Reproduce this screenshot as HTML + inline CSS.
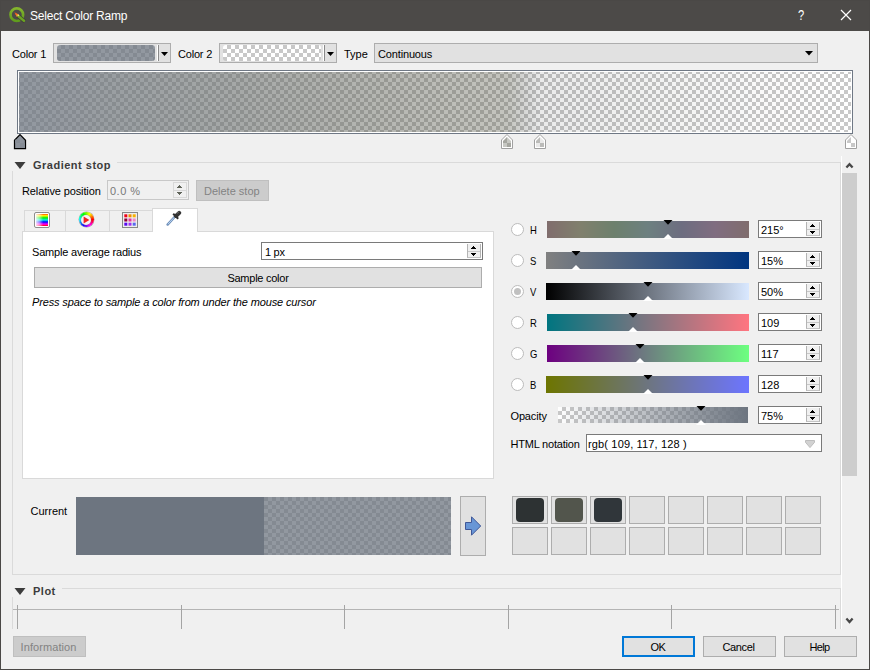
<!DOCTYPE html>
<html><head><meta charset="utf-8">
<style>
*{box-sizing:border-box;margin:0;padding:0}
html,body{width:870px;height:670px;overflow:hidden;background:#f0f0f0}
body{position:relative;font-family:"Liberation Sans",sans-serif;font-size:11px;color:#000;line-height:13px}
.a{position:absolute}
.t{position:absolute;white-space:nowrap;line-height:13px;font-size:11px}
.b{font-weight:bold;color:#3c3c3c}
.btn{position:absolute;background:#e1e1e1;border:1px solid #adadad}
.dis{position:absolute;background:#cccccc;border:1px solid #bfbfbf}
.spin{position:absolute;background:#fff;border:1px solid #7a7a7a}
.sb{position:absolute;background:#e1e1e1;border:1px solid #c6c6c6}
.chk{background:repeating-conic-gradient(#c8c8c8 0% 25%,#fff 0% 50%) 0 0/8px 8px}
.ln{position:absolute;background:#dadada}
.radio{position:absolute;width:13px;height:13px;border-radius:50%;background:#fff;border:1px solid #bcbcbc}
.bar{position:absolute;height:17px}
.cell{position:absolute;width:36px;height:28px;background:#e1e1e1;border:1px solid #adadad}
.sw{position:absolute;left:3px;top:1px;width:28px;height:24px;border-radius:4px}
</style></head><body>
<div class="a" style="left:0;top:0;width:870px;height:31px;background:#4c4a48"></div>
<svg class="a" style="left:8px;top:6px" width="18" height="18" viewBox="0 0 18 18">
 <defs><linearGradient id="qg" x1="0" y1="0" x2="0" y2="1"><stop offset="0" stop-color="#84b52c"/><stop offset="1" stop-color="#5f9c1d"/></linearGradient></defs>
 <circle cx="8.8" cy="8.7" r="6.3" fill="none" stroke="url(#qg)" stroke-width="2.7"/>
 <path d="M9.6 9.6 L16.6 15.4" stroke="#3f3d3b" stroke-width="4" stroke-linecap="butt"/>
 <path d="M10.2 10 L16 14.8" stroke="#6ba421" stroke-width="2.5" stroke-linecap="round"/>
 <path d="M6.6 6.4 L11 8.4 L8.8 11 Z" fill="#f08a1c"/>
 <path d="M6.6 6.4 L9 7.5 L7.8 8.9 Z" fill="#e8502a"/>
 <circle cx="10.4" cy="9.3" r="0.9" fill="#d8dc90"/>
</svg>
<div class="t" style="left:30px;top:8.5px;font-size:12px;letter-spacing:-0.2px;line-height:15px;color:#fff">Select Color Ramp</div>
<div class="t" style="left:798px;top:6.5px;font-size:14px;line-height:16px;color:#fff;transform:scaleX(.8);transform-origin:0 0">?</div>
<svg class="a" style="left:840px;top:9px" width="12" height="12" viewBox="0 0 12 12"><path d="M1 1 L11 11 M11 1 L1 11" stroke="#fff" stroke-width="1.2" fill="none"/></svg>
<div class="t " style="left:12px;top:48px;letter-spacing:-0.2px;">Color 1</div>
<div class="btn" style="left:53px;top:43px;width:118px;height:20px"></div>
<div class="a chk" style="left:57px;top:45px;width:98px;height:16px;border-radius:3px;overflow:hidden"><div style="width:100%;height:100%;background:rgba(109,117,128,.75)"></div></div>
<div class="a" style="left:157px;top:45px;width:1px;height:16px;background:#fff"></div><div class="a" style="left:158px;top:45px;width:1px;height:16px;background:#8a8a8a"></div>
<svg class="a" style="left:161px;top:52px" width="7" height="4"><path d="M0 0H7L3.5 4Z" fill="#000"/></svg>
<div class="t " style="left:178px;top:48px;letter-spacing:-0.2px;">Color 2</div>
<div class="btn" style="left:219px;top:43px;width:118px;height:20px"></div>
<div class="a chk" style="left:223px;top:45px;width:98px;height:16px;border-radius:3px"></div>
<div class="a" style="left:323px;top:45px;width:1px;height:16px;background:#fff"></div><div class="a" style="left:324px;top:45px;width:1px;height:16px;background:#8a8a8a"></div>
<svg class="a" style="left:327px;top:52px" width="7" height="4"><path d="M0 0H7L3.5 4Z" fill="#000"/></svg>
<div class="t " style="left:344px;top:48px;">Type</div>
<div class="btn" style="left:374px;top:43px;width:444px;height:20px"></div>
<div class="t " style="left:378px;top:48px;letter-spacing:-0.15px;">Continuous</div>
<svg class="a" style="left:805px;top:51px" width="8" height="5"><path d="M0 0H8L4 4.5Z" fill="#000"/></svg>
<div class="a" style="left:17px;top:70px;width:836px;height:64px;border:1px solid #6f7885;background:#fff"></div>
<div class="a chk" style="left:19px;top:72px;width:832px;height:60px;background-position:5px 2px">
 <div style="width:100%;height:100%;background:linear-gradient(to right,rgba(109,117,128,0.750) 0.00%,rgba(108,116,126,0.733) 2.44%,rgba(107,114,123,0.717) 4.89%,rgba(106,113,121,0.700) 7.33%,rgba(105,112,118,0.683) 9.77%,rgba(104,111,116,0.667) 12.22%,rgba(103,110,114,0.650) 14.66%,rgba(102,108,111,0.633) 17.11%,rgba(101,107,109,0.617) 19.55%,rgba(100,106,106,0.600) 21.99%,rgba(99,104,104,0.583) 24.44%,rgba(98,103,101,0.567) 26.88%,rgba(98,102,99,0.550) 29.32%,rgba(97,101,97,0.533) 31.77%,rgba(96,100,94,0.517) 34.21%,rgba(95,98,92,0.500) 36.66%,rgba(94,97,89,0.483) 39.10%,rgba(93,96,87,0.467) 41.54%,rgba(92,94,84,0.450) 43.99%,rgba(91,93,82,0.433) 46.43%,rgba(90,92,80,0.417) 48.88%,rgba(89,91,77,0.400) 51.32%,rgba(88,90,75,0.383) 53.76%,rgba(87,88,72,0.367) 56.21%,rgba(86,87,70,0.350) 58.65%,rgba(84,85,69,0.340) 58.81%,rgba(83,84,68,0.329) 58.98%,rgba(81,82,68,0.319) 59.14%,rgba(79,81,67,0.308) 59.31%,rgba(77,79,66,0.298) 59.47%,rgba(76,78,65,0.287) 59.64%,rgba(74,76,64,0.277) 59.80%,rgba(72,75,64,0.267) 59.97%,rgba(71,73,63,0.256) 60.13%,rgba(69,72,62,0.246) 60.30%,rgba(67,70,61,0.235) 60.46%,rgba(66,68,60,0.225) 60.62%,rgba(64,67,60,0.215) 60.79%,rgba(62,65,59,0.204) 60.95%,rgba(60,64,58,0.194) 61.12%,rgba(59,62,57,0.183) 61.28%,rgba(57,61,57,0.173) 61.45%,rgba(55,59,56,0.163) 61.61%,rgba(54,58,55,0.152) 61.78%,rgba(52,56,54,0.142) 61.94%,rgba(50,55,53,0.131) 62.11%,rgba(48,53,53,0.121) 62.27%,rgba(47,52,52,0.110) 62.44%,rgba(45,50,51,0.100) 62.60%,rgba(45,50,51,0.096) 64.16%,rgba(45,50,51,0.092) 65.72%,rgba(45,50,51,0.088) 67.28%,rgba(45,50,51,0.083) 68.83%,rgba(45,50,51,0.079) 70.39%,rgba(45,50,51,0.075) 71.95%,rgba(45,50,51,0.071) 73.51%,rgba(45,50,51,0.067) 75.07%,rgba(45,50,51,0.062) 76.62%,rgba(45,50,51,0.058) 78.18%,rgba(45,50,51,0.054) 79.74%,rgba(45,50,51,0.050) 81.30%,rgba(45,50,51,0.046) 82.86%,rgba(45,50,51,0.042) 84.42%,rgba(45,50,51,0.038) 85.97%,rgba(45,50,51,0.033) 87.53%,rgba(45,50,51,0.029) 89.09%,rgba(45,50,51,0.025) 90.65%,rgba(45,50,51,0.021) 92.21%,rgba(45,50,51,0.017) 93.77%,rgba(45,50,51,0.012) 95.33%,rgba(45,50,51,0.008) 96.88%,rgba(45,50,51,0.004) 98.44%,rgba(45,50,51,0.000) 100.00%)"></div>
</div>
<svg class="a" style="left:13px;top:133px" width="15" height="17" viewBox="0 0 15 17"><path d="M7 1.6 L12.5 7.3 V15.5 H1.5 V7.3 Z" fill="#8d939c" stroke="#000" stroke-width="1.25" stroke-linejoin="miter"/><rect x="7" y="10" width="4.9" height="4.9" fill="#868c95"/><rect x="2.1" y="6.6" width="4.9" height="3.4" fill="#868c95"/></svg>
<svg class="a" style="left:500px;top:133px" width="15" height="17" viewBox="0 0 15 17"><defs><clipPath id="c507"><path d="M7 4 L11 8 V14 H3 V8 Z"/></clipPath></defs><path d="M7 1.5 L12.5 7 V15.5 H1.5 V7 Z" fill="#fff" stroke="#a0a0a0" stroke-width="1"/><g clip-path="url(#c507)"><rect x="3" y="4" width="4" height="6" fill="#a5a6a0"/><rect x="7" y="4" width="4" height="6" fill="#c7c8c3"/><rect x="3" y="10" width="4" height="4" fill="#c7c8c3"/><rect x="7" y="10" width="4" height="4" fill="#a5a6a0"/></g></svg>
<svg class="a" style="left:533px;top:133px" width="15" height="17" viewBox="0 0 15 17"><defs><clipPath id="c540"><path d="M7 4 L11 8 V14 H3 V8 Z"/></clipPath></defs><path d="M7 1.5 L12.5 7 V15.5 H1.5 V7 Z" fill="#fff" stroke="#a0a0a0" stroke-width="1"/><g clip-path="url(#c540)"><rect x="3" y="4" width="4" height="6" fill="#bbbbb9"/><rect x="7" y="4" width="4" height="6" fill="#e9e9e9"/><rect x="3" y="10" width="4" height="4" fill="#e9e9e9"/><rect x="7" y="10" width="4" height="4" fill="#bbbbb9"/></g></svg>
<svg class="a" style="left:844px;top:133px" width="15" height="17" viewBox="0 0 15 17"><defs><clipPath id="c851"><path d="M7 4 L11 8 V14 H3 V8 Z"/></clipPath></defs><path d="M7 1.5 L12.5 7 V15.5 H1.5 V7 Z" fill="#fff" stroke="#a0a0a0" stroke-width="1"/><g clip-path="url(#c851)"><rect x="3" y="4" width="4" height="6" fill="#c8c8c8"/><rect x="7" y="4" width="4" height="6" fill="#ffffff"/><rect x="3" y="10" width="4" height="4" fill="#ffffff"/><rect x="7" y="10" width="4" height="4" fill="#c8c8c8"/></g></svg>
<svg class="a" style="left:14px;top:162px" width="12" height="8"><path d="M0.5 0H11.5L6 7Z" fill="#3c3c3c"/></svg>
<div class="t b" style="left:33px;top:159px;letter-spacing:0.5px;">Gradient stop</div>
<div class="ln" style="left:117px;top:162px;width:724px;height:1px"></div>
<div class="ln" style="left:12px;top:171px;width:1px;height:404px"></div>
<div class="ln" style="left:840px;top:162px;width:1px;height:413px"></div>
<div class="ln" style="left:12px;top:574px;width:829px;height:1px"></div>
<div class="t " style="left:22px;top:185px;letter-spacing:-0.12px;">Relative position</div>
<div class="a" style="left:107px;top:180px;width:82px;height:20px;border:1px solid #c8c8c8;background:#f0f0f0"></div>
<div class="t " style="left:110px;top:185px;letter-spacing:0.5px;color:#787878;">0.0 %</div>
<div class="a" style="left:173px;top:182px;width:14px;height:16px;border:1px solid #d8d8d8;background:#f0f0f0"></div>
<div class="a" style="left:174px;top:190px;width:12px;height:1px;background:#d8d8d8"></div>
<svg class="a" style="left:177px;top:185px" width="5" height="10" shape-rendering="crispEdges" fill="#60645a"><rect x="2" y="0" width="1" height="1"/><rect x="1" y="1" width="3" height="1"/><rect x="0" y="2" width="5" height="1"/><rect x="0" y="7" width="5" height="1"/><rect x="1" y="8" width="3" height="1"/><rect x="2" y="9" width="1" height="1"/></svg>
<div class="dis" style="left:196px;top:180px;width:73px;height:21px"></div>
<div class="t " style="left:204px;top:185px;color:#838383;">Delete stop</div>
<div class="a" style="left:24px;top:210px;width:129px;height:22px;border:1px solid #d9d9d9;border-bottom:none"></div>
<div class="ln" style="left:65px;top:211px;width:1px;height:21px;background:#d9d9d9"></div>
<div class="ln" style="left:109px;top:211px;width:1px;height:21px;background:#d9d9d9"></div>
<div class="a" style="left:22px;top:231px;width:472px;height:248px;border:1px solid #d9d9d9;background:#fff"></div>
<div class="a" style="left:152px;top:208px;width:46px;height:24px;border:1px solid #d9d9d9;border-bottom:none;background:#fff"></div>
<div class="a" style="left:34px;top:212px;width:16px;height:16px;border:1px solid #8c8c8c;border-radius:2px;background:#fff;padding:1px"><div style="width:12px;height:12px;background:linear-gradient(to right,rgba(255,255,255,.85),rgba(255,255,255,.5) 30%,rgba(255,255,255,0) 60%),linear-gradient(to bottom,#f40,#ff0 14%,#0e0 32%,#0ee 50%,#00f 66%,#f0f 84%,#f00)"></div></div>
<div class="a" style="left:78.5px;top:212.3px;width:15px;height:15px;border-radius:50%;background:conic-gradient(from 90deg,#f00,#f0f,#00f,#0ff,#0f0,#ff0,#f00);box-shadow:0 0 0 .5px rgba(120,120,120,.6)"></div>
<div class="a" style="left:81px;top:214.8px;width:10px;height:10px;border-radius:50%;background:#f6f0f0;box-shadow:0 0 0 .5px rgba(120,120,120,.5)"></div>
<svg class="a" style="left:83px;top:216px" width="7" height="8"><path d="M0.6 0.5L6.4 4L0.6 7.5Z" fill="#f42020"/></svg>
<div class="a" style="left:122px;top:212px;width:16px;height:16px;border:1px solid #888;background:#eee"></div>
<svg class="a" style="left:124px;top:214px" width="12" height="12">
<rect x="0.3" y="0.3" width="3" height="3" fill="#f00018"/><rect x="4.5" y="0.3" width="3" height="3" fill="#f09000"/><rect x="8.7" y="0.3" width="3" height="3" fill="#f8b000"/>
<rect x="0.3" y="4.5" width="3" height="3" fill="#900038"/><rect x="4.5" y="4.5" width="3" height="3" fill="#e830a0"/><rect x="8.7" y="4.5" width="3" height="3" fill="#f088c8"/>
<rect x="0.3" y="8.7" width="3" height="3" fill="#5808f0"/><rect x="4.5" y="8.7" width="3" height="3" fill="#a030f0"/><rect x="8.7" y="8.7" width="3" height="3" fill="#5868f0"/>
</svg>
<svg class="a" style="left:166px;top:210px" width="16" height="16" viewBox="0 0 16 16"><path d="M1.6 14.6 L9 6.5" stroke="#6f8fb8" stroke-width="2.4" stroke-linecap="round"/><path d="M2 14.2 L9 6.5" stroke="#b8d4f4" stroke-width="1"/><path d="M7.2 3.8 L12.2 8.8" stroke="#2a2a2a" stroke-width="2"/><path d="M10 6 L13.2 2.8" stroke="#333" stroke-width="4" stroke-linecap="round"/><path d="M11.2 3.4 L12.6 2" stroke="#777" stroke-width="1" stroke-linecap="round"/></svg>
<div class="t " style="left:32px;top:246px;letter-spacing:-0.18px;">Sample average radius</div>
<div class="spin" style="left:261px;top:242px;width:222px;height:18px"></div>
<div class="t " style="left:265px;top:246px;letter-spacing:-0.3px;">1 px</div>
<div class="a" style="left:467px;top:244px;width:14px;height:14px;background:#f0f0f0;border-left:1px solid #b4b4b4;border-right:1px solid #b4b4b4;border-bottom:1px solid #c4c4c4"></div>
<div class="a" style="left:468px;top:251px;width:12px;height:1px;background:#c8c8c8"></div>
<svg class="a" style="left:471px;top:246px" width="5" height="10" shape-rendering="crispEdges" fill="#000"><rect x="2" y="0" width="1" height="1"/><rect x="1" y="1" width="3" height="1"/><rect x="0" y="2" width="5" height="1"/><rect x="0" y="7" width="5" height="1"/><rect x="1" y="8" width="3" height="1"/><rect x="2" y="9" width="1" height="1"/></svg>
<div class="btn" style="left:34px;top:267px;width:448px;height:21px"></div>
<div class="t" style="left:34px;top:272px;width:448px;text-align:center;letter-spacing:-0.25px;">Sample color</div>
<div class="t " style="left:32px;top:296px;letter-spacing:-0.14px;font-style:italic;">Press space to sample a color from under the mouse cursor</div>
<div class="radio" style="left:511px;top:223px"></div>
<div class="t " style="left:529.7px;top:224px;transform:scaleX(.86);transform-origin:0 0;">H</div>
<div class="bar" style="left:547px;top:221px;width:202px;background:linear-gradient(to right,#806d6d 0%,#80806d 16.67%,#6d806d 33.33%,#6d8080 50%,#6d6d80 66.67%,#806d80 83.33%,#806d6d 100%)"></div>
<svg class="a" style="left:663px;top:220px" width="10" height="19"><path d="M0.5 0H9.5L5 4.7Z" fill="#000"/><path d="M0 19H10L5 14Z" fill="#fff"/></svg>
<div class="spin" style="left:758px;top:220px;width:64px;height:18px"></div>
<div class="t " style="left:761px;top:224px;">215°</div>
<div class="a" style="left:806px;top:222px;width:14px;height:14px;background:#f0f0f0;border-left:1px solid #b4b4b4;border-right:1px solid #b4b4b4;border-bottom:1px solid #c4c4c4"></div>
<div class="a" style="left:807px;top:229px;width:12px;height:1px;background:#c8c8c8"></div>
<svg class="a" style="left:810px;top:224px" width="5" height="10" shape-rendering="crispEdges" fill="#000"><rect x="2" y="0" width="1" height="1"/><rect x="1" y="1" width="3" height="1"/><rect x="0" y="2" width="5" height="1"/><rect x="0" y="7" width="5" height="1"/><rect x="1" y="8" width="3" height="1"/><rect x="2" y="9" width="1" height="1"/></svg>
<div class="radio" style="left:511px;top:254px"></div>
<div class="t " style="left:529.7px;top:255px;transform:scaleX(.86);transform-origin:0 0;">S</div>
<div class="bar" style="left:546px;top:252px;width:203px;background:linear-gradient(to right,#808080,#003580)"></div>
<svg class="a" style="left:571px;top:251px" width="10" height="19"><path d="M0.5 0H9.5L5 4.7Z" fill="#000"/><path d="M0 19H10L5 14Z" fill="#fff"/></svg>
<div class="spin" style="left:758px;top:251px;width:64px;height:18px"></div>
<div class="t " style="left:761px;top:255px;">15%</div>
<div class="a" style="left:806px;top:253px;width:14px;height:14px;background:#f0f0f0;border-left:1px solid #b4b4b4;border-right:1px solid #b4b4b4;border-bottom:1px solid #c4c4c4"></div>
<div class="a" style="left:807px;top:260px;width:12px;height:1px;background:#c8c8c8"></div>
<svg class="a" style="left:810px;top:255px" width="5" height="10" shape-rendering="crispEdges" fill="#000"><rect x="2" y="0" width="1" height="1"/><rect x="1" y="1" width="3" height="1"/><rect x="0" y="2" width="5" height="1"/><rect x="0" y="7" width="5" height="1"/><rect x="1" y="8" width="3" height="1"/><rect x="2" y="9" width="1" height="1"/></svg>
<div class="radio" style="left:511px;top:285px;border-color:#bcbcbc"></div><div class="a" style="left:514px;top:288px;width:7px;height:7px;border-radius:50%;background:#c0c0c0"></div>
<div class="t " style="left:529.7px;top:286px;transform:scaleX(.86);transform-origin:0 0;">V</div>
<div class="bar" style="left:546px;top:283px;width:203px;background:linear-gradient(to right,#000,#d9e8ff)"></div>
<svg class="a" style="left:643px;top:282px" width="10" height="19"><path d="M0.5 0H9.5L5 4.7Z" fill="#000"/><path d="M0 19H10L5 14Z" fill="#fff"/></svg>
<div class="spin" style="left:758px;top:282px;width:64px;height:18px"></div>
<div class="t " style="left:761px;top:286px;">50%</div>
<div class="a" style="left:806px;top:284px;width:14px;height:14px;background:#f0f0f0;border-left:1px solid #b4b4b4;border-right:1px solid #b4b4b4;border-bottom:1px solid #c4c4c4"></div>
<div class="a" style="left:807px;top:291px;width:12px;height:1px;background:#c8c8c8"></div>
<svg class="a" style="left:810px;top:286px" width="5" height="10" shape-rendering="crispEdges" fill="#000"><rect x="2" y="0" width="1" height="1"/><rect x="1" y="1" width="3" height="1"/><rect x="0" y="2" width="5" height="1"/><rect x="0" y="7" width="5" height="1"/><rect x="1" y="8" width="3" height="1"/><rect x="2" y="9" width="1" height="1"/></svg>
<div class="radio" style="left:511px;top:316px"></div>
<div class="t " style="left:529.7px;top:317px;transform:scaleX(.86);transform-origin:0 0;">R</div>
<div class="bar" style="left:547px;top:314px;width:202px;background:linear-gradient(to right,#007580,#ff7580)"></div>
<svg class="a" style="left:628px;top:313px" width="10" height="19"><path d="M0.5 0H9.5L5 4.7Z" fill="#000"/><path d="M0 19H10L5 14Z" fill="#fff"/></svg>
<div class="spin" style="left:758px;top:313px;width:64px;height:18px"></div>
<div class="t " style="left:761px;top:317px;">109</div>
<div class="a" style="left:806px;top:315px;width:14px;height:14px;background:#f0f0f0;border-left:1px solid #b4b4b4;border-right:1px solid #b4b4b4;border-bottom:1px solid #c4c4c4"></div>
<div class="a" style="left:807px;top:322px;width:12px;height:1px;background:#c8c8c8"></div>
<svg class="a" style="left:810px;top:317px" width="5" height="10" shape-rendering="crispEdges" fill="#000"><rect x="2" y="0" width="1" height="1"/><rect x="1" y="1" width="3" height="1"/><rect x="0" y="2" width="5" height="1"/><rect x="0" y="7" width="5" height="1"/><rect x="1" y="8" width="3" height="1"/><rect x="2" y="9" width="1" height="1"/></svg>
<div class="radio" style="left:511px;top:347px"></div>
<div class="t " style="left:529.7px;top:348px;transform:scaleX(.86);transform-origin:0 0;">G</div>
<div class="bar" style="left:547px;top:345px;width:202px;background:linear-gradient(to right,#6d0080,#6dff80)"></div>
<svg class="a" style="left:635px;top:344px" width="10" height="19"><path d="M0.5 0H9.5L5 4.7Z" fill="#000"/><path d="M0 19H10L5 14Z" fill="#fff"/></svg>
<div class="spin" style="left:758px;top:344px;width:64px;height:18px"></div>
<div class="t " style="left:761px;top:348px;">117</div>
<div class="a" style="left:806px;top:346px;width:14px;height:14px;background:#f0f0f0;border-left:1px solid #b4b4b4;border-right:1px solid #b4b4b4;border-bottom:1px solid #c4c4c4"></div>
<div class="a" style="left:807px;top:353px;width:12px;height:1px;background:#c8c8c8"></div>
<svg class="a" style="left:810px;top:348px" width="5" height="10" shape-rendering="crispEdges" fill="#000"><rect x="2" y="0" width="1" height="1"/><rect x="1" y="1" width="3" height="1"/><rect x="0" y="2" width="5" height="1"/><rect x="0" y="7" width="5" height="1"/><rect x="1" y="8" width="3" height="1"/><rect x="2" y="9" width="1" height="1"/></svg>
<div class="radio" style="left:511px;top:378px"></div>
<div class="t " style="left:529.7px;top:379px;transform:scaleX(.86);transform-origin:0 0;">B</div>
<div class="bar" style="left:546px;top:376px;width:203px;background:linear-gradient(to right,#6d7500,#6d75ff)"></div>
<svg class="a" style="left:643px;top:375px" width="10" height="19"><path d="M0.5 0H9.5L5 4.7Z" fill="#000"/><path d="M0 19H10L5 14Z" fill="#fff"/></svg>
<div class="spin" style="left:758px;top:375px;width:64px;height:18px"></div>
<div class="t " style="left:761px;top:379px;">128</div>
<div class="a" style="left:806px;top:377px;width:14px;height:14px;background:#f0f0f0;border-left:1px solid #b4b4b4;border-right:1px solid #b4b4b4;border-bottom:1px solid #c4c4c4"></div>
<div class="a" style="left:807px;top:384px;width:12px;height:1px;background:#c8c8c8"></div>
<svg class="a" style="left:810px;top:379px" width="5" height="10" shape-rendering="crispEdges" fill="#000"><rect x="2" y="0" width="1" height="1"/><rect x="1" y="1" width="3" height="1"/><rect x="0" y="2" width="5" height="1"/><rect x="0" y="7" width="5" height="1"/><rect x="1" y="8" width="3" height="1"/><rect x="2" y="9" width="1" height="1"/></svg>
<div class="t " style="left:510.5px;top:410px;letter-spacing:-0.15px;">Opacity</div>
<div class="bar chk" style="left:558px;top:407px;width:190px;height:16px"><div style="width:100%;height:100%;background:linear-gradient(to right,rgba(109,117,128,0),rgba(109,117,128,1))"></div></div>
<svg class="a" style="left:696px;top:406px" width="10" height="19"><path d="M0.5 0H9.5L5 4.7Z" fill="#000"/><path d="M0 19H10L5 14Z" fill="#fff"/></svg>
<div class="spin" style="left:758px;top:406px;width:64px;height:18px"></div>
<div class="t " style="left:761px;top:410px;">75%</div>
<div class="a" style="left:806px;top:408px;width:14px;height:14px;background:#f0f0f0;border-left:1px solid #b4b4b4;border-right:1px solid #b4b4b4;border-bottom:1px solid #c4c4c4"></div>
<div class="a" style="left:807px;top:415px;width:12px;height:1px;background:#c8c8c8"></div>
<svg class="a" style="left:810px;top:410px" width="5" height="10" shape-rendering="crispEdges" fill="#000"><rect x="2" y="0" width="1" height="1"/><rect x="1" y="1" width="3" height="1"/><rect x="0" y="2" width="5" height="1"/><rect x="0" y="7" width="5" height="1"/><rect x="1" y="8" width="3" height="1"/><rect x="2" y="9" width="1" height="1"/></svg>
<div class="t " style="left:510.5px;top:438px;letter-spacing:-0.2px;">HTML notation</div>
<div class="spin" style="left:586px;top:434px;width:236px;height:18px"></div>
<div class="t " style="left:588px;top:438px;letter-spacing:0.15px;">rgb( 109, 117, 128 )</div>
<svg class="a" style="left:805px;top:440px" width="10" height="9"><path d="M0.5 0.5H9.5V2.3L5 7.6L0.5 2.3Z" fill="#d2d2d2" stroke="#bdbdbd" stroke-width="1"/></svg>
<div class="t " style="left:30.5px;top:505px;">Current</div>
<div class="a" style="left:76px;top:497px;width:188px;height:58px;background:#6d7580"></div>
<div class="a chk" style="left:264px;top:497px;width:187px;height:58px;background-position:4px 0"><div style="width:100%;height:100%;background:rgba(109,117,128,.75)"></div></div>
<div class="btn" style="left:460px;top:496px;width:26px;height:60px"></div>
<svg class="a" style="left:464px;top:515px" width="18" height="22" viewBox="0 0 18 22"><path d="M1.5 7.5 H7.5 V1.8 L16.7 11 L7.5 20.2 V14.5 H1.5 Z" fill="#6896d6" stroke="#3f5798" stroke-width="1"/></svg>
<div class="cell" style="left:512px;top:496px"><div class="sw" style="background:#2d3233"></div></div>
<div class="cell" style="left:551px;top:496px"><div class="sw" style="background:#52554c"></div></div>
<div class="cell" style="left:590px;top:496px"><div class="sw" style="background:#30363a"></div></div>
<div class="cell" style="left:629px;top:496px"></div>
<div class="cell" style="left:668px;top:496px"></div>
<div class="cell" style="left:707px;top:496px"></div>
<div class="cell" style="left:746px;top:496px"></div>
<div class="cell" style="left:785px;top:496px"></div>
<div class="cell" style="left:512px;top:527px"></div>
<div class="cell" style="left:551px;top:527px"></div>
<div class="cell" style="left:590px;top:527px"></div>
<div class="cell" style="left:629px;top:527px"></div>
<div class="cell" style="left:668px;top:527px"></div>
<div class="cell" style="left:707px;top:527px"></div>
<div class="cell" style="left:746px;top:527px"></div>
<div class="cell" style="left:785px;top:527px"></div>
<svg class="a" style="left:14px;top:588px" width="12" height="8"><path d="M0.5 0H11.5L6 7Z" fill="#3c3c3c"/></svg>
<div class="t b" style="left:33px;top:585px;letter-spacing:0.5px;">Plot</div>
<div class="ln" style="left:62px;top:588px;width:779px;height:1px"></div>
<div class="ln" style="left:12px;top:597px;width:1px;height:32px"></div>
<div class="ln" style="left:840px;top:588px;width:1px;height:41px"></div>
<div class="a" style="left:13px;top:609px;width:826px;height:1px;background:#b4b4b4"></div>
<div class="a" style="left:17px;top:605px;width:1px;height:24px;background:#a4a4a4"></div>
<div class="a" style="left:181px;top:605px;width:1px;height:24px;background:#a4a4a4"></div>
<div class="a" style="left:344px;top:605px;width:1px;height:24px;background:#a4a4a4"></div>
<div class="a" style="left:508px;top:605px;width:1px;height:24px;background:#a4a4a4"></div>
<div class="a" style="left:671px;top:605px;width:1px;height:24px;background:#a4a4a4"></div>
<div class="a" style="left:835px;top:605px;width:1px;height:24px;background:#a4a4a4"></div>
<div class="a" style="left:841px;top:156px;width:1px;height:473px;background:#fff"></div>
<div class="a" style="left:842px;top:173px;width:15px;height:303px;background:#cdcdcd"></div>
<svg class="a" style="left:845px;top:161px" width="9" height="8"><path d="M1.4 6.6 L4.5 3.2 L7.6 6.6" stroke="#484848" stroke-width="2.3" fill="none"/></svg>
<svg class="a" style="left:845px;top:617px" width="9" height="8"><path d="M1.4 1.6 L4.5 5 L7.6 1.6" stroke="#484848" stroke-width="2.3" fill="none"/></svg>
<div class="dis" style="left:13px;top:636px;width:73px;height:21px"></div>
<div class="t" style="left:12px;top:641px;width:73px;text-align:center;letter-spacing:0.07px;color:#838383;">Information</div>
<div class="btn" style="left:622px;top:636px;width:73px;height:21px;border:2px solid #0078d7"></div>
<div class="t" style="left:621.5px;top:641px;width:73px;text-align:center;letter-spacing:-0.5px;">OK</div>
<div class="btn" style="left:703px;top:636px;width:73px;height:21px"></div>
<div class="t" style="left:702px;top:641px;width:73px;text-align:center;letter-spacing:-0.4px;">Cancel</div>
<div class="btn" style="left:784px;top:636px;width:73px;height:21px"></div>
<div class="t" style="left:783px;top:641px;width:73px;text-align:center;letter-spacing:-0.6px;">Help</div>
<div class="a" style="left:0;top:0;width:870px;height:670px;border:1px solid #4a4846;pointer-events:none"></div>
</body></html>
